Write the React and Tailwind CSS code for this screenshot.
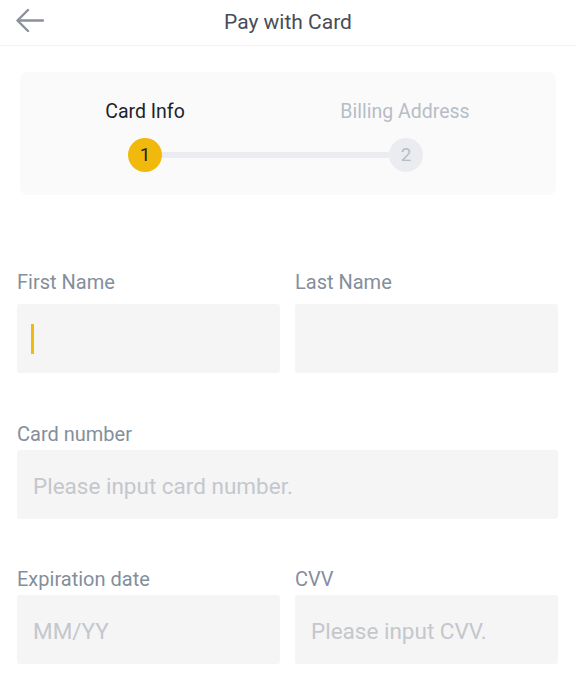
import React from 'react';

const Field = ({ label, placeholder, cursor, labelClass }) => (
  <div className="flex flex-col min-w-0">
    <label className={`text-[20px] leading-[24px] text-[#848e9c] ${labelClass}`}>{label}</label>
    <div className="h-[69px] rounded-[3px] bg-[#f5f5f5] flex items-center px-[16px]">
      {cursor && <div className="w-[3px] h-[30px] bg-[#f0b90b] ml-[-2px]"></div>}
      {placeholder && <span className="pt-[5px] text-[22.5px] text-[#c4c7cc] whitespace-nowrap">{placeholder}</span>}
    </div>
  </div>
);

export default function App() {
  return (
    <div className="w-[576px] h-[681px] bg-white overflow-hidden font-['Roboto',sans-serif]">
      {/* Header */}
      <div className="relative h-[46px] border-b border-[#f3f3f3] flex items-center justify-center">
        <button className="absolute left-[16px] top-[8px] w-[28px] h-[25px] text-[#8a919c]">
          <svg viewBox="0 0 28 25" className="w-full h-full" fill="none" stroke="currentColor" strokeWidth="2.4" strokeLinecap="round" strokeLinejoin="round">
            <path d="M27 12.5H2" />
            <path d="M12 2L1.5 12.5L12 23" />
          </svg>
        </button>
        <h1 className="text-[21px] text-[#474d57]">Pay with Card</h1>
      </div>

      {/* Stepper */}
      <div className="mx-[20px] mt-[26px] h-[123px] rounded-[8px] bg-[#fafafa] pt-[28px]">
        <div className="ml-[25px] grid grid-cols-[200px_200px] gap-x-[60px]">
          <span className="text-center text-[19.5px] leading-[24px] text-[#1e2329]">Card Info</span>
          <span className="text-center text-[19.5px] leading-[24px] text-[#b7bdc6]">Billing Address</span>
        </div>
        <div className="flex items-center mt-[14px] pl-[108px]">
          <div className="w-[34px] h-[34px] rounded-full bg-[#f0b90b] flex items-center justify-center text-[19px] text-[#1e2329]">1</div>
          <div className="w-[227px] h-[6px] bg-[#eaecef]"></div>
          <div className="w-[34px] h-[34px] rounded-full bg-[#eaecef] flex items-center justify-center text-[19px] text-[#b7bdc6]">2</div>
        </div>
      </div>

      {/* Form */}
      <div className="pl-[17px] pr-[18px] mt-[75px] flex flex-col">
        <div className="grid grid-cols-2 gap-x-[15px]">
          <Field label="First Name" cursor labelClass="mb-[10px]" />
          <Field label="Last Name" labelClass="mb-[10px]" />
        </div>
        <div className="mt-[49px]">
          <Field label="Card number" placeholder="Please input card number." labelClass="mb-[4px]" />
        </div>
        <div className="mt-[48px] grid grid-cols-2 gap-x-[15px]">
          <Field label="Expiration date" placeholder="MM/YY" labelClass="mb-[4px]" />
          <Field label="CVV" placeholder="Please input CVV." labelClass="mb-[4px]" />
        </div>
      </div>
    </div>
  );
}
